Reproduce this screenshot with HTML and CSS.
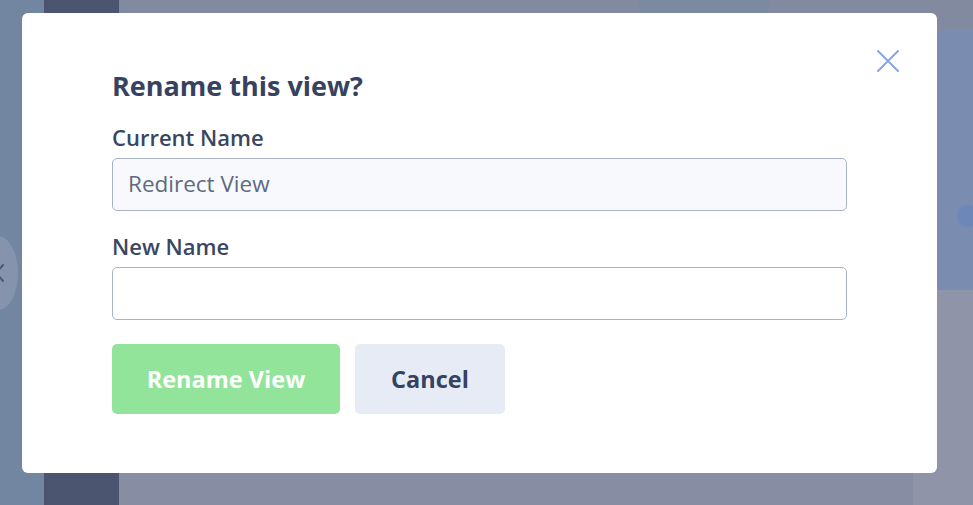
FILE: index.html
```html
<!DOCTYPE html>
<html lang="en">
<head>
<meta charset="utf-8">
<title>Rename this view?</title>
<link rel="stylesheet" href="styles.css">
</head>
<body>
<div class="page">
  <div class="rail">
    <div class="rail-toggle">
      <svg class="chev" width="10" height="18" viewBox="0 0 10 18" fill="none" stroke="#4f586c" stroke-width="2" stroke-linecap="round" stroke-linejoin="round">
        <path d="M8 1 L1 9 L8 17"/>
      </svg>
    </div>
  </div>
  <div class="sidebar"></div>
  <div class="main">
    <div class="top-band">
      <div class="band-gap"></div>
      <div class="band-blue"></div>
    </div>
    <div class="main-body">
      <div class="main-content"></div>
      <div class="right-col">
        <div class="right-blue"><span class="dot"></span></div>
        <div class="right-gray"></div>
      </div>
    </div>
  </div>

  <div class="modal" role="dialog" aria-labelledby="modal-title">
    <button class="close" aria-label="Close">
      <svg width="24" height="24" viewBox="0 0 24 24" fill="none" stroke="#86a6e6" stroke-width="2" stroke-linecap="round">
        <path d="M2 2 L22 22 M22 2 L2 22"/>
      </svg>
    </button>
    <h2 id="modal-title" class="title">Rename this view?</h2>
    <label class="label">Current Name</label>
    <div class="input input-readonly">Redirect View</div>
    <label class="label">New Name</label>
    <div class="input"></div>
    <div class="actions">
      <button class="btn btn-primary">Rename View</button>
      <button class="btn btn-secondary">Cancel</button>
    </div>
  </div>
</div>
</body>
</html>
```
FILE: styles.css
```css
* { box-sizing: border-box; }
html, body { margin: 0; padding: 0; }
body {
  width: 973px;
  height: 505px;
  overflow: hidden;
  font-family: "Open Sans", "Noto Sans", sans-serif;
}
.page {
  position: relative;
  display: flex;
  width: 973px;
  height: 505px;
  background: #878ea4;
}
.rail {
  width: 44px;
  background: #7285a1;
  display: flex;
  align-items: center;
  overflow: hidden;
}
.rail-toggle {
  width: 40px;
  height: 74px;
  margin-left: -22px;
  margin-top: 40px;
  border-radius: 50%;
  background: #8593ad;
  display: flex;
  align-items: center;
  justify-content: flex-end;
  padding-right: 13px;
  flex-shrink: 0;
}
.chev { display: block; }
.sidebar {
  width: 75px;
  background: #4b5570;
}
.main {
  flex: 1;
  display: flex;
  flex-direction: column;
}
.top-band {
  height: 30px;
  display: flex;
  background: #828a9f;
}
.band-gap { width: 520px; }
.band-blue {
  width: 130px;
  background: #7b89a1;
  border-radius: 0 0 40px 40px;
}
.main-body {
  flex: 1;
  display: flex;
}
.main-content { flex: 1; background: #878ea4; }
.right-col {
  width: 60px;
  display: flex;
  flex-direction: column;
}
.right-blue {
  height: 260px;
  background: #7a8caf;
  border-radius: 30px 0 0 0;
  display: flex;
  justify-content: flex-end;
  padding-top: 175px;
}
.dot {
  width: 22px;
  height: 22px;
  border-radius: 50%;
  background: #6d88b8;
  margin-right: -6px;
}
.right-gray { flex: 1; background: #8f94a8; }

.modal {
  position: absolute;
  left: 22px;
  top: 13px;
  width: 915px;
  height: 460px;
  background: #ffffff;
  border-radius: 6px;
  padding: 57px 90px 0 90px;
  display: flex;
  flex-direction: column;
  align-items: stretch;
}
.close {
  position: absolute;
  top: 36px;
  right: 37px;
  width: 24px;
  height: 24px;
  padding: 0;
  border: 0;
  background: none;
  display: flex;
}
.title {
  margin: 0;
  font-size: 27px;
  line-height: 32px;
  font-weight: 700;
  color: #354260;
}
.label {
  display: block;
  margin: 22px 0 8px;
  font-size: 22px;
  line-height: 26px;
  font-weight: 600;
  color: #3a4661;
}
.input {
  height: 53px;
  border: 1px solid #a8b3c7;
  border-radius: 5px;
  background: #ffffff;
  padding: 0 15px 2px;
  display: flex;
  align-items: center;
  font-size: 22.5px;
  color: #5f6a80;
}
.input-readonly { background: #f7f9fd; }
.actions {
  display: flex;
  gap: 15px;
  margin-top: 24px;
}
.btn {
  height: 70px;
  border: 0;
  border-radius: 5px;
  font-family: inherit;
  font-size: 23.5px;
  font-weight: 700;
  display: flex;
  align-items: center;
  justify-content: center;
}
.btn-primary {
  width: 228px;
  background: #93e49b;
  color: #ffffff;
}
.btn-secondary {
  width: 150px;
  background: #e7ebf5;
  color: #354260;
}
```
